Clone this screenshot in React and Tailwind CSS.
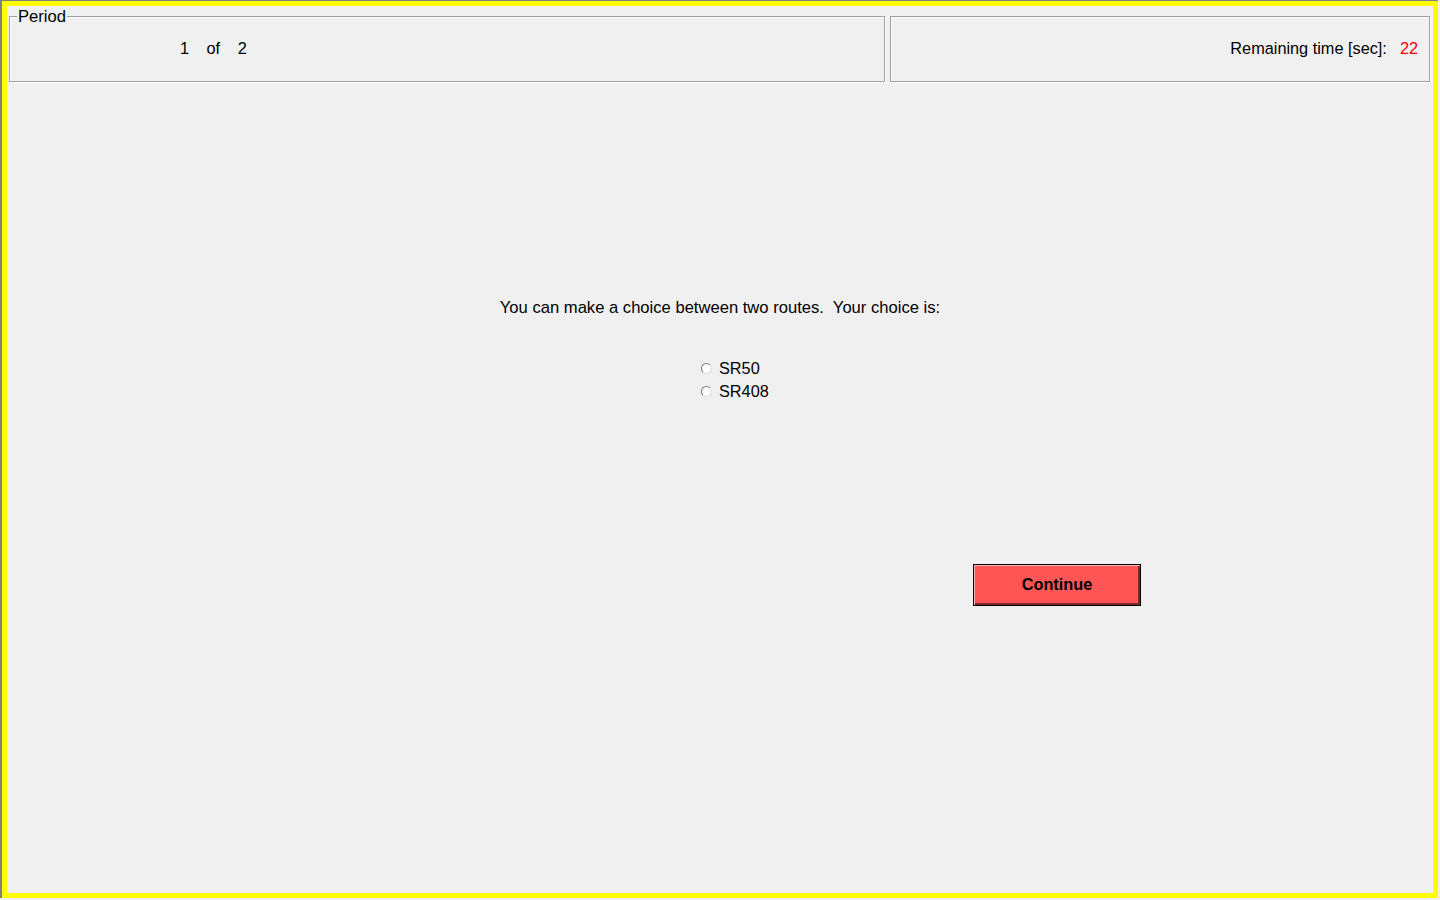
import React, { useState } from "react";

const font = { fontFamily: '"Liberation Sans", Arial, sans-serif' };

const Radio = ({ checked, onClick, label }) => (
  <label className="flex items-center gap-[7px] h-[23px] cursor-pointer" onClick={onClick}>
    <span className="flex items-center justify-center w-[11px] h-[11px] rounded-full border border-t-[#7a7a7a] border-l-[#7a7a7a] border-b-[#dcdcdc] border-r-[#dcdcdc] bg-white">
      {checked && <span className="w-[5px] h-[5px] rounded-full bg-black" />}
    </span>
    <span className="text-[16.3px] leading-[23px] text-black">{label}</span>
  </label>
);

const App = () => {
  const [choice, setChoice] = useState(null);

  return (
    <div className="w-[1440px] h-[900px] bg-[#f0f0f0] overflow-hidden" style={font}>
      <div className="w-[1438px] h-[898px] border-l-2 border-t border-[#808080]">
        <div className="w-[1436px] h-[897px] border-[5px] border-[#ffff00] bg-[#f0f0f0]">
          <div className="flex pl-[2px] pt-[10px] gap-[5px]">
            <div className="relative w-[876px] h-[66px] pb-[2px] border border-[#a0a0a0] shadow-[inset_1px_1px_0_#ffffff,1px_1px_0_#ffffff] flex items-center">
              <span className="absolute left-[7px] top-[-9px] px-[1px] bg-[#f0f0f0] text-[16.6px] leading-[18px] text-black">
                Period
              </span>
              <div className="flex gap-[17.5px] pl-[170px] text-[16.3px] leading-[18px] text-black">
                <span>1</span>
                <span>of</span>
                <span>2</span>
              </div>
            </div>
            <div className="w-[540px] h-[66px] pb-[2px] border border-[#a0a0a0] shadow-[inset_1px_1px_0_#ffffff,1px_1px_0_#ffffff] flex items-center justify-end gap-[13px] pr-[11px] text-[16.3px] leading-[18px]">
              <span className="text-black">Remaining time [sec]:</span>
              <span className="text-[#ff0000]">22</span>
            </div>
          </div>

          <p className="mt-[217px] text-center text-[16.6px] leading-[18px] text-black whitespace-pre">
            {"You can make a choice between two routes.  Your choice is:"}
          </p>

          <div className="mt-[40px] ml-[694px] flex flex-col">
            <Radio label="SR50" checked={choice === "SR50"} onClick={() => setChoice("SR50")} />
            <Radio label="SR408" checked={choice === "SR408"} onClick={() => setChoice("SR408")} />
          </div>

          <div className="mt-[161px] ml-[966px]">
            <button className="w-[168px] h-[42px] pb-[1px] bg-[#ff5555] border border-black shadow-[inset_1px_1px_0_#ffb3b3,inset_-2px_-2px_0_#7a2a2a] text-[16.3px] font-bold text-black">
              Continue
            </button>
          </div>
        </div>
      </div>
    </div>
  );
};

export default App;
